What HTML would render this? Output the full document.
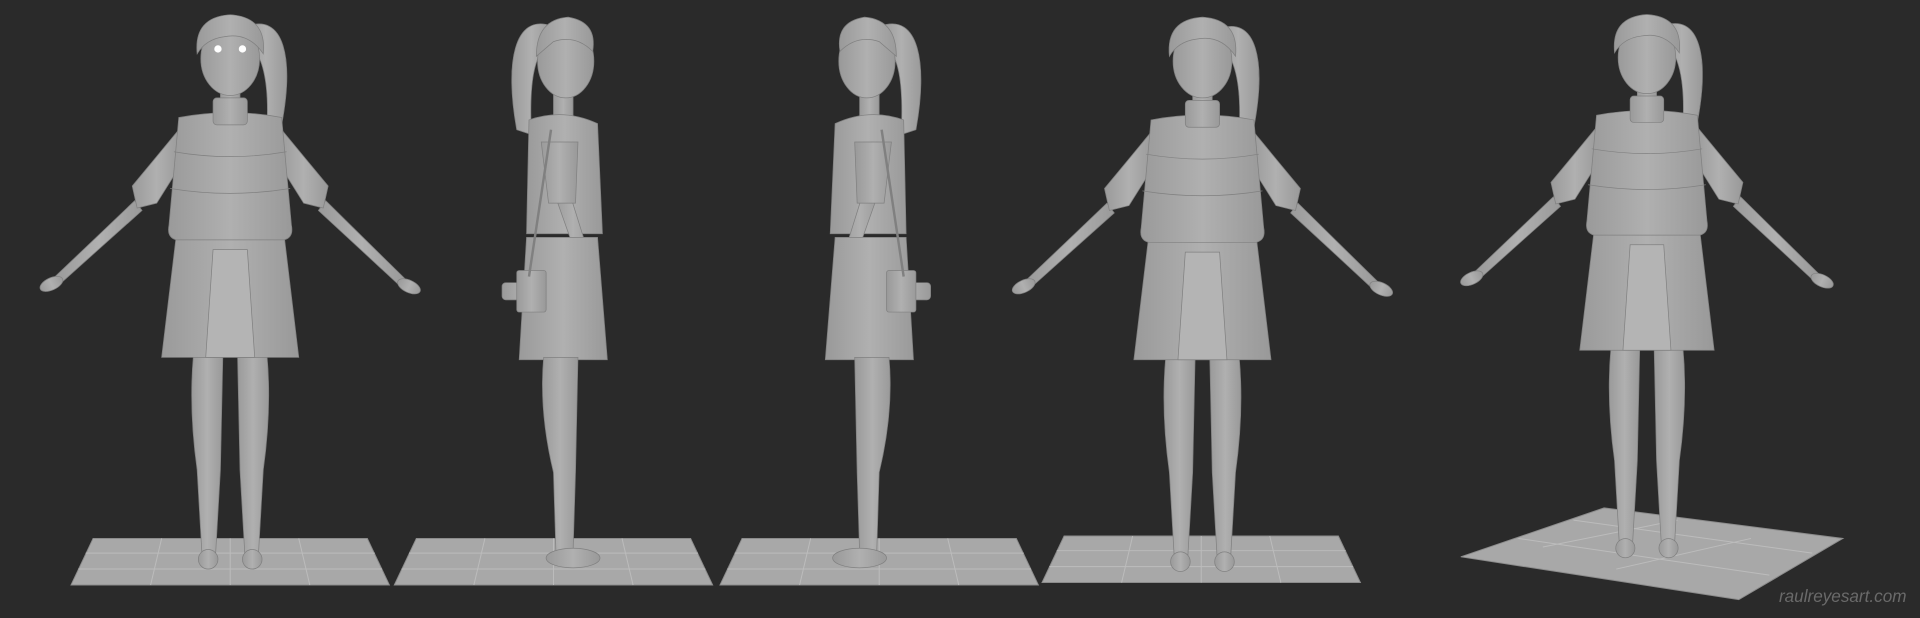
<!DOCTYPE html>
<html><head><meta charset="utf-8"><style>
html,body{margin:0;padding:0;background:#2a2a2a;width:1920px;height:618px;overflow:hidden}
svg{display:block}
</style></head><body>
<svg width="1920" height="618" viewBox="0 0 1568 505" preserveAspectRatio="none" xmlns="http://www.w3.org/2000/svg">
<defs>
<linearGradient id="g" x1="0" x2="1"><stop offset="0" stop-color="#9a9a9a"/><stop offset=".5" stop-color="#b0b0b0"/><stop offset="1" stop-color="#999"/></linearGradient>
<g id="front" fill="url(#g)" stroke="#808080" stroke-width="0.6">
  <path d="M12,18 C45,5 52,45 42,98 L30,100 C32,62 26,38 14,32 Z"/>
  <rect x="-8" y="66" width="16" height="26"/>
  <path d="M-78,160 L-143,222 L-139,228 L-72,168 Z"/>
  <path d="M78,160 L143,224 L139,230 L72,168 Z"/>
  <ellipse cx="-146" cy="228" rx="10" ry="5" transform="rotate(-25 -146 228)"/>
  <ellipse cx="146" cy="230" rx="10" ry="5" transform="rotate(25 146 230)"/>
  <path d="M-42,102 L-80,148 L-76,166 L-60,162 L-40,130 Z"/>
  <path d="M42,102 L80,148 L76,166 L60,162 L40,130 Z"/>
  <path d="M-30,286 L-6,286 L-8,380 L-12,450 L-23,450 L-27,380 Q-34,330 -30,286 Z"/>
  <path d="M30,286 L6,286 L8,380 L12,450 L23,450 L27,380 Q34,330 30,286 Z"/>
  <ellipse cx="-18" cy="453" rx="8" ry="8"/><ellipse cx="18" cy="453" rx="8" ry="8"/>
  <path d="M-44,188 L44,188 L56,288 L-56,288 Z"/>
  <path d="M-14,200 L14,200 L20,288 L-20,288 Z" fill="#b4b4b4"/>
  <path d="M-42,92 Q0,84 42,92 L50,180 Q52,190 44,192 L-44,192 Q-52,190 -50,180 Z"/>
  <path d="M-46,120 Q0,128 46,120 M-49,150 Q0,158 49,150" fill="none"/>
  <rect x="-14" y="76" width="28" height="22" rx="3"/>
  <ellipse cx="0" cy="44" rx="24" ry="30"/>
  <path d="M-27,40 Q-30,10 0,8 Q30,10 27,40 Q15,22 -5,26 Q-20,28 -27,40 Z"/>
</g>
<g id="side" fill="url(#g)" stroke="#808080" stroke-width="0.6">
  <path d="M-10,15 C-40,5 -48,45 -38,100 L-26,104 C-28,62 -24,38 -12,30 Z"/>
  <rect x="-8" y="66" width="16" height="26"/>
  <path d="M-28,92 Q0,82 28,95 L32,185 L-30,185 Z"/>
  <path d="M-8,150 L15,215 L24,212 L4,148 Z"/>
  <ellipse cx="20" cy="220" rx="7" ry="10"/>
  <path d="M-18,110 L12,110 L10,160 L-12,160 Z"/>
  <path d="M-30,188 L28,188 L36,288 L-36,288 Z"/>
  <path d="M-16,286 L12,286 L10,380 L8,445 L-6,445 L-8,380 Q-20,330 -16,286 Z"/>
  <ellipse cx="8" cy="450" rx="22" ry="8"/>
  <ellipse cx="2" cy="44" rx="23" ry="30"/>
  <path d="M-22,40 Q-22,10 4,8 Q28,12 24,36 Q10,22 -8,28 Z"/>
  <rect x="-50" y="225" width="35" height="14" rx="3"/>
  <rect x="-38" y="215" width="24" height="34" rx="2"/>
  <path d="M-10,100 L-28,220" fill="none" stroke-width="2"/>
</g>
<g id="base" fill="#a8a8a8" stroke="#8c8c8c" stroke-width="0.8">
  <path d="M-112,0 L112,0 L130,38 L-130,38 Z"/>
  <path d="M-56,0 L-65,38 M0,0 L0,38 M56,0 L65,38 M-118,12 L118,12 M-124,25 L124,25" fill="none" stroke="#bcbcbc"/>
</g>
</defs>
<rect width="1568" height="505" fill="#2a2a2a"/>
<use href="#base" x="188" y="440"/>
<use href="#base" x="452" y="440"/>
<use href="#base" x="718" y="440"/>
<use href="#base" x="981" y="438"/>
<path d="M1193,455 L1310,415 L1505,440 L1420,490 Z" fill="#a8a8a8" stroke="#8c8c8c" stroke-width="0.8"/>
<path d="M1240,440 L1445,470 M1285,425 L1480,452 M1260,447 L1370,425 M1320,465 L1430,440" fill="none" stroke="#bcbcbc" stroke-width="0.8"/>
<use href="#front" x="188" y="4"/>
<use href="#side" x="460" y="6"/>
<use href="#side" transform="translate(710 6) scale(-1 1)"/>
<use href="#front" x="982" y="6"/>
<use href="#front" transform="translate(1345 4) scale(0.98)"/>
<circle cx="178" cy="40" r="3" fill="#fff"/><circle cx="198" cy="40" r="3" fill="#fff"/>
<text x="1557" y="492" text-anchor="end" font-family="Liberation Sans, sans-serif" font-style="italic" font-size="14" fill="#6a6a6a">raulreyesart.com</text>
</svg>
</body></html>
